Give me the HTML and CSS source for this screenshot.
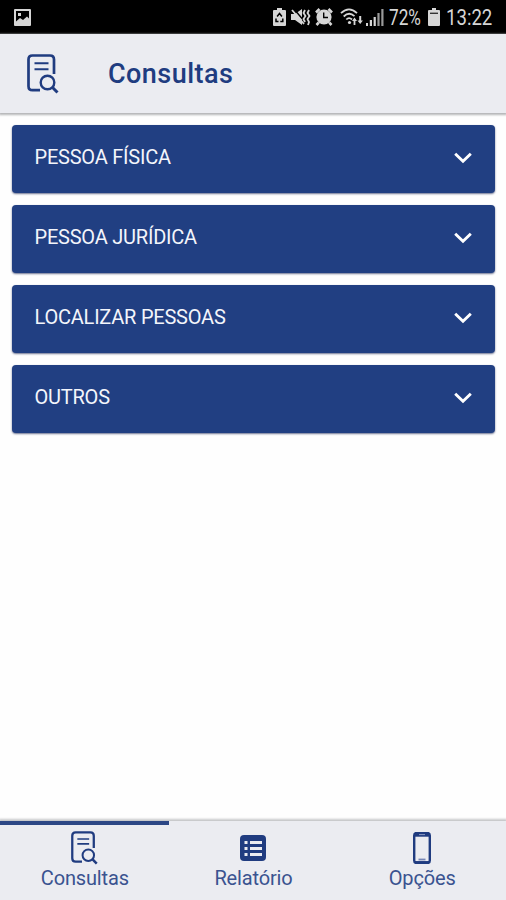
FILE: index.html
```html
<!DOCTYPE html>
<html lang="pt-BR">
<head>
<meta charset="utf-8">
<meta name="viewport" content="width=device-width">
<title>Consultas</title>
<link rel="stylesheet" href="styles.css">
</head>
<body>
<svg class="sprite" aria-hidden="true">
  <symbol id="doc-search" viewBox="0 0 32 40">
    <path d="M13 36.2H5.5Q1.5 36.2 1.5 32.2V5.5Q1.5 1.5 5.5 1.5H23Q27 1.5 27 5.5V20" fill="none" stroke="currentColor" stroke-width="2.7"/>
    <path d="M7.5 9.3H21.5M7.5 15.2H21.5" fill="none" stroke="currentColor" stroke-width="2"/>
    <circle cx="20.5" cy="28.5" r="6.8" fill="none" stroke="currentColor" stroke-width="2.4"/>
    <path d="M25.3 33.3L30.5 38.5" stroke="currentColor" stroke-width="3"/>
  </symbol>
  <symbol id="chevron" viewBox="0 0 18 12">
    <path d="M1.2 1.7L9 9.3L16.8 1.7" fill="none" stroke="currentColor" stroke-width="2.9"/>
  </symbol>
</svg>
<div class="app">
  <div class="status">
    <svg class="photo" viewBox="0 0 17 17"><path fill="currentColor" fill-rule="evenodd" d="M1 0H16Q17 0 17 1V16Q17 17 16 17H1Q0 17 0 16V1Q0 0 1 0ZM2 2V12.5L6 9L9 11L13 7.5L15 9.5V2ZM4 4H7V7H4Z"/></svg>
    <svg class="saver" viewBox="0 0 13 18"><path fill="currentColor" d="M4 0H9V2H12Q13 2 13 3V17Q13 18 12 18H1Q0 18 0 17V3Q0 2 1 2H4Z"/><path d="M4.1 8.5L6.5 5.5L8.9 8.5M9.8 10.5V13.5H7.3M5.5 13.5H3V10.5" fill="none" stroke="#000" stroke-width="1.5"/></svg>
    <svg class="mute" viewBox="0 0 20 18"><path fill="currentColor" d="M0 6H4L11 1V17L4 12H0Z"/><path d="M2.5 .5L14 14" stroke="#000" stroke-width="1.4"/><path d="M1 2L13 16M14 2L12.5 5L14.5 8L12.5 11L14 14M18 2L16.5 5L18.5 8L16.5 11L18 14L17 17" fill="none" stroke="currentColor" stroke-width="1.8"/></svg>
    <svg class="alarm" viewBox="0 0 18 18"><circle cx="9" cy="9" r="7.6" fill="currentColor"/><path d="M1 4.5L4.5 1M17 4.5L13.5 1M3.8 14.5L1.5 17M14.2 14.5L16.5 17" stroke="currentColor" stroke-width="2.6"/><path d="M8.7 4.5V9.5H13" fill="none" stroke="#000" stroke-width="1.4"/></svg>
    <svg class="wifi" viewBox="0 0 24 18"><path d="M1 5.2Q9-2.5 17 5.2M3.7 8.5Q9 3.2 14.5 8.2M6.3 11.5Q9 8.6 12 11.5" fill="none" stroke="currentColor" stroke-width="1.8"/><circle cx="9.5" cy="14.5" r="1.6" fill="currentColor"/><path fill="currentColor" d="M12 13L14.5 9.5L17 13H15.4V17H13.6V13ZM17.5 12.5H19.2V8H21.2V12.5H22.9L20.2 16Z"/></svg>
    <svg class="signal" viewBox="0 0 18 17"><path fill="currentColor" d="M0 14H2V17H0ZM3.8 11H6V17H3.8ZM7.6 8H9.8V17H7.6Z"/><path fill="#999" d="M11.4 4H13.6V17H11.4ZM15.3 0H17.5V17H15.3Z"/></svg>
    <span class="pct">72%</span>
    <svg class="battery" viewBox="0 0 12 18"><path fill="currentColor" d="M4 0H8V2H11Q12 2 12 3V17Q12 18 11 18H1Q0 18 0 17V3Q0 2 1 2H4Z"/><path d="M2 5.3H10" stroke="#333" stroke-width="1.4"/></svg>
    <span class="clock">13:22</span>
  </div>
  <header class="header">
    <svg class="header-icon"><use href="#doc-search"/></svg>
    <h1>Consultas</h1>
  </header>
  <main class="list">
    <div class="card"><span>PESSOA FÍSICA</span><svg class="chevron"><use href="#chevron"/></svg></div>
    <div class="card"><span>PESSOA JURÍDICA</span><svg class="chevron"><use href="#chevron"/></svg></div>
    <div class="card"><span>LOCALIZAR PESSOAS</span><svg class="chevron"><use href="#chevron"/></svg></div>
    <div class="card"><span>OUTROS</span><svg class="chevron"><use href="#chevron"/></svg></div>
  </main>
  <nav class="tabs">
    <div class="tab active"><svg class="tab-doc"><use href="#doc-search"/></svg><span>Consultas</span></div>
    <div class="tab"><svg class="tab-list" viewBox="0 0 26 26"><rect width="26" height="26" rx="4" fill="currentColor"/><path fill="#ebecf1" d="M4.5 6H7.5V9H4.5ZM4.5 12H7.5V15H4.5ZM4.5 18H7.5V21H4.5ZM10 6H22V9H10ZM10 12H22V15H10ZM10 18H22V21H10Z"/></svg><span>Relatório</span></div>
    <div class="tab"><svg class="tab-phone" viewBox="0 0 18 32"><rect x="1.2" y="1" width="15.6" height="30" rx="2.5" fill="none" stroke="currentColor" stroke-width="2.4"/><path d="M1 3H17" stroke="currentColor" stroke-width="3.4"/><path d="M6 2.6H12" stroke="#8d9bc3" stroke-width="1"/><path d="M5.5 27.5H12.5" stroke="#7686b5" stroke-width="1.8"/><path d="M2 29.8H16" stroke="currentColor" stroke-width="1.5"/></svg><span>Opções</span></div>
  </nav>
</div>
</body>
</html>
```
FILE: styles.css
```css
* { box-sizing: border-box; }
body { margin: 0; font-family: Roboto, "Liberation Sans", sans-serif; background: #fefefe; }
svg { display: block; flex: none; }
.sprite { display: none; }
.app { height: 900px; display: flex; flex-direction: column; overflow: hidden; }

.status { height: 34px; flex: none; display: flex; align-items: center; background: #000; color: #d6d6d6; padding: 0 14px; }
.photo { width: 17px; height: 17px; margin-right: auto; }
.saver { width: 13px; height: 18px; margin-right: 5px; }
.mute { width: 20px; height: 18px; margin-right: 4px; }
.alarm { width: 18px; height: 18px; margin-right: 7px; }
.wifi { width: 24px; height: 18px; margin-right: 2px; }
.signal { width: 18px; height: 17px; margin-right: 5px; }
.pct, .clock { font-size: 21.5px; line-height: 34px; padding-top: 1px; white-space: nowrap; transform-origin: 0 50%; }
.pct { width: 34px; margin-right: 5px; transform: scaleX(0.8); }
.battery { width: 12px; height: 18px; margin-right: 6px; }
.clock { width: 46px; transform: scaleX(0.865); }

.header { height: 79px; flex: none; display: flex; align-items: center; padding: 0 27px; background: #ebecf1; color: #203c80; box-shadow: 0 1px 2px 1px #b5b6b8; }
.header-icon { width: 32px; height: 40px; margin-right: 49px; }
h1 { margin: 0; font-size: 27px; line-height: 32px; font-weight: 500; letter-spacing: 0.45px; }

.list { flex: 1; display: flex; flex-direction: column; gap: 12px; padding: 12px 11px 0 12px; }
.card { height: 68px; display: flex; align-items: center; justify-content: space-between; padding: 0 23px 4px 22.5px; border-radius: 4px; background: #213f82; color: #f3f5fb; font-size: 20px; letter-spacing: -0.22px; box-shadow: 0 1px 2px #6c7390; }
.chevron { width: 18px; height: 12px; color: #fff; margin-top: 2px; }

.tabs { height: 79px; flex: none; display: grid; grid-template-columns: repeat(3, 1fr); background: #ebecf1; color: #203c80; box-shadow: 0 -1px 2px 1px #c6c7c9; }
.tab { display: flex; flex-direction: column; align-items: center; justify-content: space-between; border-top: 4px solid transparent; padding: 6px 0 10px; font-size: 20px; line-height: 24px; }
.tab span { color: #3a5390; letter-spacing: -0.15px; margin-left: 1px; }
.active { border-top-color: #2c4785; }
.tab-doc { width: 27px; height: 34px; }
.tab-list { width: 26px; height: 26px; margin-top: 4px; }
.tab-phone { width: 18px; height: 32px; margin-top: 1px; }
```
